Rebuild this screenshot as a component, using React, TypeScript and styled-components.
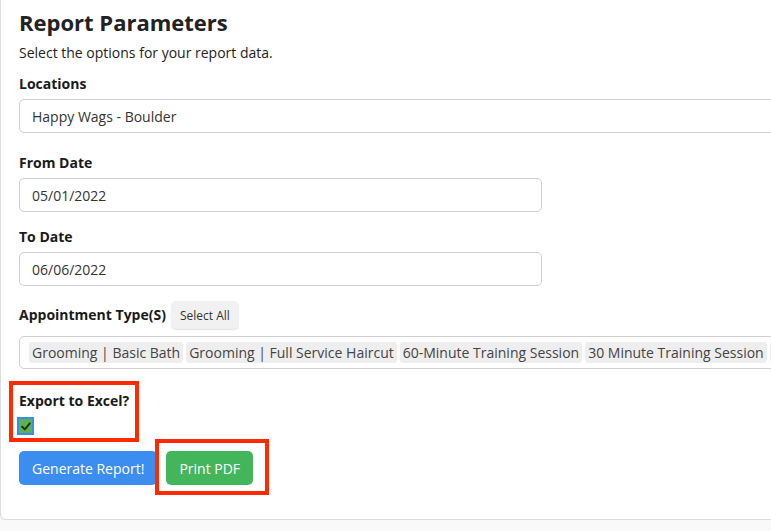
import React, { useState } from 'react';
import styled, { createGlobalStyle } from 'styled-components';

const GlobalStyle = createGlobalStyle`
	html, body {
		margin: 0;
		padding: 0;
		background: #f9f9f9;
		overflow: hidden;
	}
	body {
		font-family: 'Open Sans', 'Liberation Sans', sans-serif;
		color: #222;
	}
`;

const Card = styled.div`
	width: 830px;
	margin-top: -10px;
	padding: 18px 18px 34px 18px;
	background: #fff;
	border: 1px solid #dcdcdc;
	border-radius: 6px;
	box-shadow: 0 1px 0 rgba(0, 0, 0, 0.06);
	box-sizing: border-box;
`;

const Title = styled.h2`
	margin: 0;
	font-size: 22px;
	line-height: 26px;
	font-weight: 700;
	color: #222;
`;

const Subtitle = styled.p`
	margin: 8px 0 0;
	font-size: 14px;
	line-height: 20px;
	color: #222;
`;

const Label = styled.div<{ $top: number; $bottom?: number }>`
	margin-top: ${p => p.$top}px;
	margin-bottom: ${p => p.$bottom ?? 5}px;
	font-size: 14px;
	line-height: 20px;
	font-weight: 700;
	color: #1a1a1a;
`;

const Field = styled.div<{ $width: number }>`
	width: ${p => p.$width}px;
	height: 34px;
	display: flex;
	align-items: center;
	padding: 0 12px;
	border: 1px solid #cfcfcf;
	border-radius: 5px;
	box-sizing: border-box;
	font-size: 14px;
	color: #333;
	background: #fff;
`;

const LabelRow = styled.div`
	margin-top: 15px;
	display: flex;
	align-items: center;
	gap: 5px;
	height: 28px;
`;

const InlineLabel = styled.span`
	font-size: 14px;
	line-height: 20px;
	font-weight: 700;
	color: #1a1a1a;
`;

const SmallButton = styled.button`
	height: 28px;
	padding: 0 9px;
	border: none;
	border-radius: 5px;
	background: #f1f1f1;
	box-shadow: 0 1px 1px rgba(0, 0, 0, 0.12);
	font-family: inherit;
	font-size: 12px;
	color: #333;
`;

const TagBox = styled.div`
	width: 790px;
	height: 33px;
	margin-top: 7px;
	display: flex;
	align-items: center;
	gap: 3px;
	padding: 0 9px;
	border: 1px solid #cfcfcf;
	border-radius: 5px;
	box-sizing: border-box;
	white-space: nowrap;
	overflow: hidden;
`;

const Tag = styled.span`
	flex: none;
	height: 21px;
	line-height: 21px;
	padding: 0 3px;
	border-radius: 3px;
	background: #eeeeee;
	font-size: 14px;
	color: #444;
`;

const Highlight = styled.div<{ $inset: string }>`
	position: relative;
	display: inline-flex;
	flex-direction: column;
	align-items: flex-start;

	&::after {
		content: '';
		position: absolute;
		inset: ${p => p.$inset};
		border: 4px solid #ff2a00;
		pointer-events: none;
	}
`;

const ExportBlock = styled(Highlight)`
	margin-top: 22px;
`;

const CheckBox = styled.span<{ $checked: boolean }>`
	margin-top: 8px;
	width: 13px;
	height: 14px;
	display: flex;
	align-items: center;
	justify-content: center;
	background: ${p => (p.$checked ? '#5bb44b' : '#fff')};
	box-shadow: 0 0 0 2px #3b8cf0;
	cursor: pointer;
`;

const ButtonRow = styled.div`
	margin-top: 18px;
	display: flex;
	align-items: flex-start;
	gap: 9px;
`;

const ActionButton = styled.button<{ $color: string }>`
	height: 34px;
	padding: 0 13px;
	border: none;
	border-radius: 5px;
	background: ${p => p.$color};
	color: #fff;
	font-family: inherit;
	font-size: 14px;
`;

const appointmentTypes = [
	'Grooming | Basic Bath',
	'Grooming | Full Service Haircut',
	'60-Minute Training Session',
	'30 Minute Training Session',
	'Daycare | Full Day',
];

export default function App() {
	const [exportExcel, setExportExcel] = useState(true);

	return (
		<>
			<GlobalStyle />
			<Card>
				<Title>Report Parameters</Title>
				<Subtitle>Select the options for your report data.</Subtitle>

				<Label $top={11}>Locations</Label>
				<Field $width={790}>Happy Wags - Boulder</Field>

				<Label $top={20}>From Date</Label>
				<Field $width={523}>05/01/2022</Field>

				<Label $top={15}>To Date</Label>
				<Field $width={523}>06/06/2022</Field>

				<LabelRow>
					<InlineLabel>Appointment Type(S)</InlineLabel>
					<SmallButton>Select All</SmallButton>
				</LabelRow>
				<TagBox>
					{appointmentTypes.map(t => (
						<Tag key={t}>{t}</Tag>
					))}
				</TagBox>

				<div>
					<ExportBlock $inset="-10px -10px -9px -10px">
						<InlineLabel>Export to Excel?</InlineLabel>
						<CheckBox $checked={exportExcel} onClick={() => setExportExcel(!exportExcel)}>
							{exportExcel && (
								<svg width="10" height="9" viewBox="0 0 10 9">
									<path
										d="M1.2 4.8 L3.8 7.4 L8.8 1.4"
										fill="none"
										stroke="#2b2b2b"
										strokeWidth="2"
										strokeLinecap="round"
										strokeLinejoin="round"
									/>
								</svg>
							)}
						</CheckBox>
					</ExportBlock>
				</div>

				<ButtonRow>
					<ActionButton $color="#3b8ef0">Generate Report!</ActionButton>
					<Highlight $inset="-12px -16px -10px -11px">
						<ActionButton $color="#43b65b">Print PDF</ActionButton>
					</Highlight>
				</ButtonRow>
			</Card>
		</>
	);
}
